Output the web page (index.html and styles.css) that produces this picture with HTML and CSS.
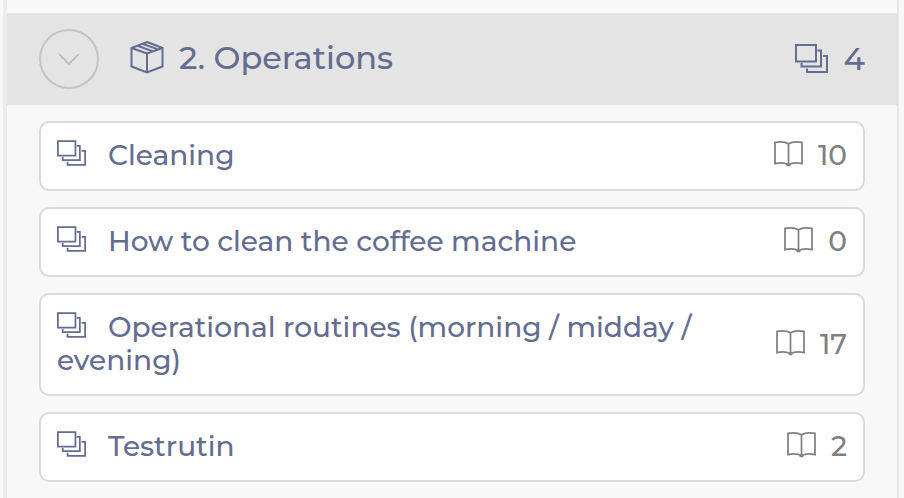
FILE: index.html
```html
<!DOCTYPE html>
<html lang="en">
<head>
   <meta charset="UTF-8" />
   <meta name="viewport" content="width=device-width, initial-scale=1.0"/>
   <title>Operations</title>
   <link rel="stylesheet" href="styles.css">
</head>
<body>

   <!-- shared icons -->
   <svg class="icon-defs" aria-hidden="true">
      <symbol id="icon-stack" viewBox="0 0 33 29">
         <path d="M1 1h20v16.5H1zM22.5 6.5H26v16H6.5V19M28 12h4v16H12v-3.5"/>
      </symbol>
      <symbol id="icon-book" viewBox="0 0 30 28">
         <path d="M15 4C11 1.500 6 1.500 1 2.500v22c5-1 10-1 14 1 4-2 9-2 14-1v-22C24 1.500 19 1.500 15 4zM15 4v21.500M13 26.300h4"/>
      </symbol>
      <symbol id="icon-box" viewBox="0 0 34 34">
         <path d="M17 2 32.500 8v18.500L17 32.500 1.500 26.500V8zM1.500 8 17 13.500 32.500 8M17 13.500v19M7.500 5.700l15.500 5.700M12.500 3.700l15.500 5.700"/>
      </symbol>
   </svg>

   <main class="panel">
      <header class="section-header">
         <button class="toggle" type="button" aria-label="Collapse section" aria-expanded="true">
            <svg class="chevron" viewBox="0 0 22 12"><path d="M1 1l10 10L21 1"/></svg>
         </button>
         <svg class="icon icon-box"><use href="#icon-box"/></svg>
         <h2 class="section-title">2. Operations</h2>
         <span class="section-count">
            <svg class="icon icon-stack-large"><use href="#icon-stack"/></svg>
            4
         </span>
      </header>

      <ul class="list">
         <li>
            <a class="item" href="#cleaning">
               <span class="item-name"><svg class="icon icon-stack"><use href="#icon-stack"/></svg>Cleaning</span>
               <span class="item-count"><svg class="icon icon-book"><use href="#icon-book"/></svg>10</span>
            </a>
         </li>
         <li>
            <a class="item" href="#coffee-machine">
               <span class="item-name"><svg class="icon icon-stack"><use href="#icon-stack"/></svg>How to clean the coffee machine</span>
               <span class="item-count"><svg class="icon icon-book"><use href="#icon-book"/></svg>0</span>
            </a>
         </li>
         <li>
            <a class="item" href="#routines">
               <span class="item-name"><svg class="icon icon-stack"><use href="#icon-stack"/></svg>Operational routines (morning / midday / evening)</span>
               <span class="item-count"><svg class="icon icon-book"><use href="#icon-book"/></svg>17</span>
            </a>
         </li>
         <li>
            <a class="item" href="#testrutin">
               <span class="item-name"><svg class="icon icon-stack"><use href="#icon-stack"/></svg>Testrutin</span>
               <span class="item-count"><svg class="icon icon-book"><use href="#icon-book"/></svg>2</span>
            </a>
         </li>
      </ul>
   </main>

</body>
</html>
```

FILE: styles.css
```css
* {
   margin: 0;
   padding: 0;
   box-sizing: border-box;
}
body {
   background-color: #f8f8f8;
   color: #646c90;
   font-family: Montserrat, Inter, sans-serif;
   font-weight: 500;
}
.icon-defs {
   display: none;
}
.panel {
   min-height: 100vh;
   margin: 0 5px 0 3px;
   padding-top: 13px;
   border-left: 4px solid #ececec;
   border-right: 2px solid #e6e6e6;
}
.section-header {
   display: flex;
   align-items: center;
   padding: 16px 32px;
   background-color: #e4e4e4;
}
.toggle {
   display: flex;
   align-items: center;
   justify-content: center;
   width: 60px;
   height: 60px;
   margin-right: 31px;
   border: 2px solid #c4c4c4;
   border-radius: 50%;
   background: none;
   color: #b8b8b8;
   cursor: pointer;
}
.icon, .chevron {
   flex: none;
   fill: none;
   stroke: currentColor;
   stroke-width: 2;
}
.chevron {
   width: 22px;
   height: 12px;
   stroke-width: 1.6;
}
.icon-box {
   width: 34px;
   height: 34px;
   margin: 0 15px 4px 0;
}
.section-title {
   font-size: 32px;
   font-weight: 500;
   line-height: 58px;
   padding-bottom: 2px;
}
.section-count {
   display: flex;
   align-items: center;
   gap: 16px;
   margin-left: auto;
   padding-bottom: 2px;
   font-size: 32px;
}
.icon-stack-large {
   width: 33px;
   height: 29px;
}
.list {
   display: grid;
   gap: 16px;
   padding: 16px 32px;
   list-style: none;
}
.item {
   display: flex;
   align-items: center;
   justify-content: space-between;
   gap: 64px;
   padding: 16px 16px 17px;
   border: 2px solid #dadada;
   border-radius: 10px;
   background-color: #fff;
   color: inherit;
   font-size: 28px;
   line-height: 33px;
   text-decoration: none;
}
.icon-stack {
   width: 29px;
   height: 26px;
   margin-right: 22px;
   vertical-align: -1px;
}
.item-count {
   display: flex;
   align-items: center;
   gap: 15px;
   color: #808080;
}
.icon-book {
   width: 29px;
   height: 27px;
   margin-bottom: 4px;
   stroke-width: 1.8;
}
```
